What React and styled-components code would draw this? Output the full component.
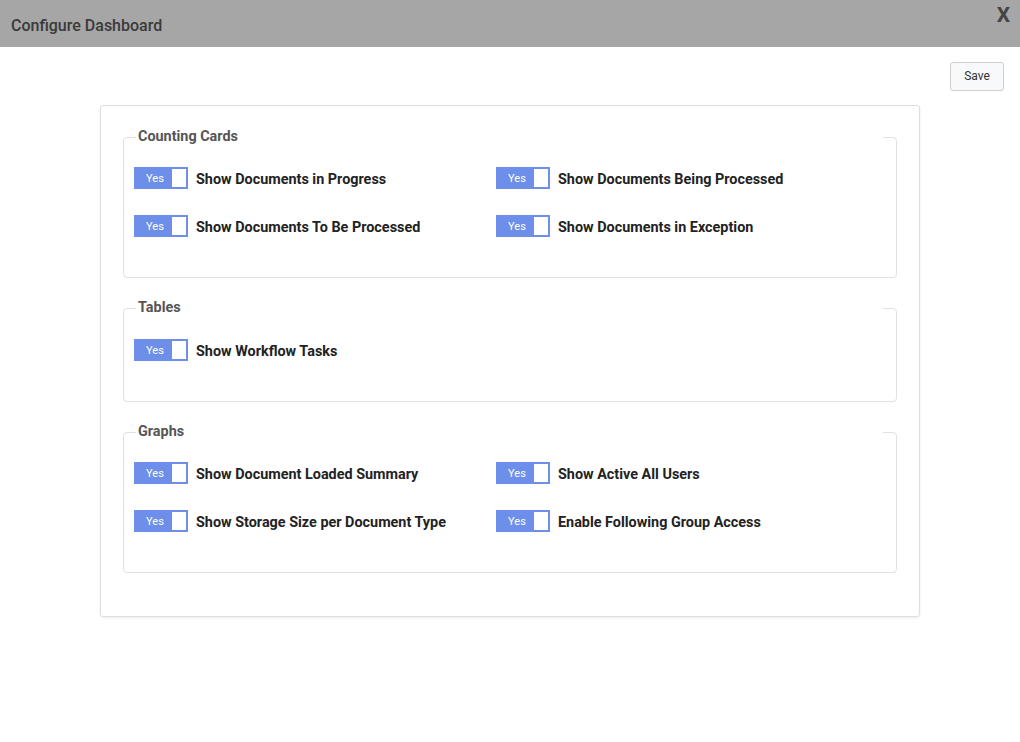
import React from "react";
import styled, { createGlobalStyle } from "styled-components";

const GlobalStyle = createGlobalStyle`
  html, body {
    margin: 0;
    padding: 0;
    background: #ffffff;
    font-family: Roboto, "Liberation Sans", Arial, sans-serif;
  }
`;

const Page = styled.div`
  width: 1020px;
  min-height: 742px;
  background: #fff;
`;

const Header = styled.div`
  height: 47px;
  background: #a6a6a6;
  display: flex;
  align-items: flex-start;
  justify-content: space-between;
  padding: 0 10px 0 11px;
  box-sizing: border-box;
`;

const Title = styled.div`
  font-size: 16px;
  font-weight: 500;
  color: #3a3a3a;
  line-height: 19px;
  margin-top: 16px;
`;

const Close = styled.div`
  font-size: 21px;
  font-weight: 700;
  color: #444;
  line-height: 24px;
  margin-top: 3px;
  cursor: pointer;
`;

const Toolbar = styled.div`
  display: flex;
  justify-content: flex-end;
  padding: 15px 16px 14px;
`;

const SaveButton = styled.button`
  width: 54px;
  height: 29px;
  background: #f8f9fa;
  border: 1px solid #cfcfcf;
  border-radius: 3px;
  font-family: Roboto, "Liberation Sans", Arial, sans-serif;
  font-size: 12px;
  line-height: 14px;
  color: #333;
  padding: 0 0 2px;
`;

const Card = styled.div`
  width: 820px;
  margin: 0 auto;
  box-sizing: border-box;
  border: 1px solid #dedede;
  border-radius: 3px;
  box-shadow: 0 1px 3px rgba(0, 0, 0, 0.08);
  padding: 23px 22px 21px;
`;

const Group = styled.fieldset`
  margin: 0 0 22px;
  border: 1px solid #dfe1e5;
  border-radius: 4px;
  padding: ${(p) => (p.$single ? "23px 10px 40px" : "22px 10px 40px")};
  min-width: 0;
`;

const Legend = styled.legend`
  width: 745px;
  margin-left: 2px;
  padding: 0 0 0 2px;
  font-size: 14.4px;
  line-height: 16px;
  font-weight: 700;
  color: #555;
`;

const Grid = styled.div`
  display: grid;
  grid-template-columns: 362px 1fr;
  row-gap: 26px;
`;

const Row = styled.div`
  display: flex;
  align-items: center;
  gap: 8px;
  height: 22px;
`;

const Toggle = styled.div`
  width: 54px;
  height: 22px;
  box-sizing: border-box;
  border: 2px solid #6e8fe9;
  background: #6e8fe9;
  display: flex;
  flex-shrink: 0;
`;

const ToggleText = styled.span`
  flex: 1;
  display: flex;
  align-items: center;
  justify-content: center;
  color: #fff;
  font-size: 11px;
  padding-left: 2px;
`;

const Knob = styled.span`
  width: 14px;
  height: 18px;
  background: #fff;
`;

const Label = styled.span`
  font-size: 14.4px;
  font-weight: 700;
  color: #222;
  padding-top: 3px;
`;

const groups = [
  {
    title: "Counting Cards",
    items: [
      "Show Documents in Progress",
      "Show Documents Being Processed",
      "Show Documents To Be Processed",
      "Show Documents in Exception",
    ],
  },
  { title: "Tables", items: ["Show Workflow Tasks"] },
  {
    title: "Graphs",
    items: [
      "Show Document Loaded Summary",
      "Show Active All Users",
      "Show Storage Size per Document Type",
      "Enable Following Group Access",
    ],
  },
];

const Switch = () => (
  <Toggle>
    <ToggleText>Yes</ToggleText>
    <Knob />
  </Toggle>
);

export default function App() {
  return (
    <Page>
      <GlobalStyle />
      <Header>
        <Title>Configure Dashboard</Title>
        <Close>X</Close>
      </Header>
      <Toolbar>
        <SaveButton>Save</SaveButton>
      </Toolbar>
      <Card>
        {groups.map((g) => (
          <Group key={g.title} $single={g.items.length === 1}>
            <Legend>{g.title}</Legend>
            <Grid>
              {g.items.map((item) => (
                <Row key={item}>
                  <Switch />
                  <Label>{item}</Label>
                </Row>
              ))}
            </Grid>
          </Group>
        ))}
      </Card>
    </Page>
  );
}
